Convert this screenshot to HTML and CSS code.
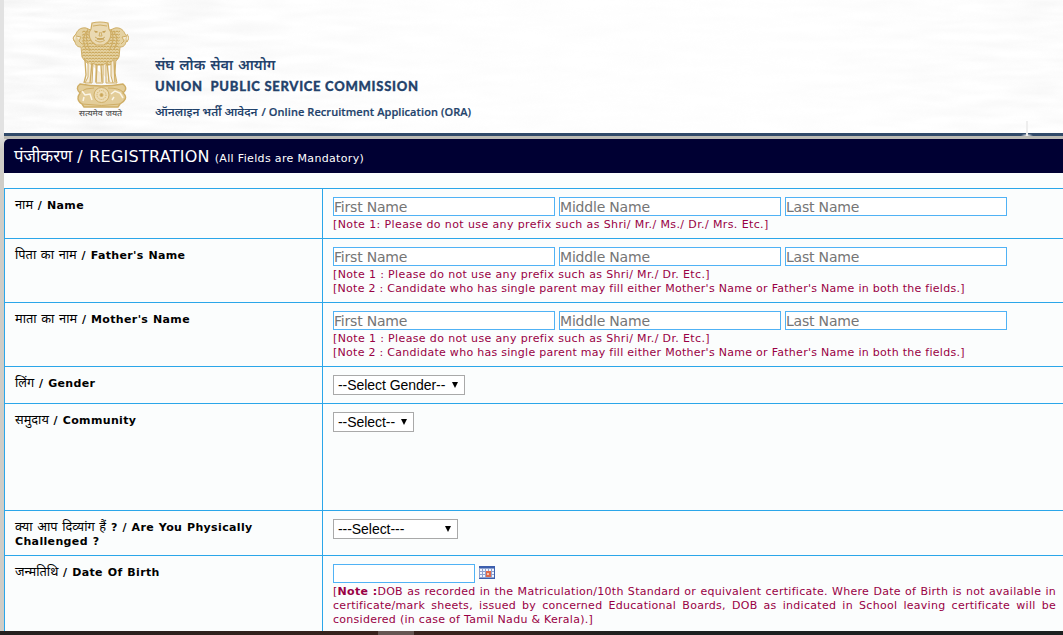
FILE: index.html
```html
<!DOCTYPE html>
<html lang="hi">
<head>
<meta charset="utf-8">
<title>UPSC Online Recruitment Application</title>
<link rel="stylesheet" href="styles.css">
</head>
<body>
<div class="page">
  <header class="banner">
    <svg class="texture" width="1059" height="133" aria-hidden="true">
      <defs>
        <filter id="streaks" x="0" y="0" width="100%" height="100%">
          <feTurbulence type="fractalNoise" baseFrequency="0.018 0.12" numOctaves="2" seed="4"/>
          <feColorMatrix values="0 0 0 0 .82  0 0 0 0 .82  0 0 0 0 .82  1 0 0 0 -.28"/>
        </filter>
        <linearGradient id="fade">
          <stop offset="0" stop-color="#fff"/><stop offset=".2" stop-color="#999"/>
          <stop offset=".4" stop-color="#333"/><stop offset=".72" stop-color="#222"/><stop offset="1" stop-color="#999"/>
        </linearGradient>
        <mask id="edges"><rect width="1059" height="133" fill="url(#fade)"/></mask>
      </defs>
      <g mask="url(#edges)"><rect width="1059" height="133" filter="url(#streaks)"/></g>
    </svg>
    <div class="crest">
      <svg class="emblem" viewBox="72 21 57 87" width="57" height="87" fill="none" stroke="#cfae66" stroke-width="1" role="img" aria-label="State emblem">
        <defs>
          <pattern id="mane" width="3" height="3" patternUnits="userSpaceOnUse">
            <path d="M0 1l1.500 1L3 1" stroke="#c7a252" stroke-width="1"/>
          </pattern>
        </defs>
        <path fill="#e5d2a2" d="M86 28c-6-1-9 3-10 6-2 2-4 5-1 8 1 4 3 5 6 5l1 10c3 5 6 7 10 8h17c4-1 7-3 10-8l1-10c3 0 5-1 6-5 3-3 1-6-1-8-1-3-4-7-10-6l-7 3H93z"/>
        <path fill="url(#mane)" stroke="none" d="M82 30h38l-1 28-9 7H91l-9-8z"/>
        <path fill="#f4ead2" d="M76 34l-3 4 2 4m1-6 5 1-2 4 3 3m45-10 2 4-2 4m0-6-5 1 2 4-3 3"/>
        <path fill="#ead9b2" stroke-width="1.200" d="M92 23q8-2 16 0l1 6c3 4 2 9-1 13l-4 3h-8l-4-3c-3-4-4-9-1-13z"/>
        <path d="M93 26q7-2 14 0M94 31l4 1m8-1-4 1m-2 0-1 4h3l-1-4m-6 5q5 4 10 0m-10 3q5 4 10 0"/>
        <path stroke="#b99243" stroke-width="1.200" d="M95 32h2m6 0h2m-8 7h7"/>
        <path stroke-width="1.200" d="M86 32q-5 8 0 17m28-17q6 8 0 17M88 29q-4 10 2 22m21-22q5 10-2 22"/>
        <path fill="#f5ebd6" d="M84 59l4 3v15l-3 6h7l1-20 3 2v18h7V65l3-2v20h7l-2-7V62l5-4-1 15 2 10h-4"/>
        <path stroke-width="1.400" d="M85 60l1 15-2 8m8-20-2 20m7-18-1 17m5-17 1 17m5-20 2 20m5-22 1 22"/>
        <path fill="#e3cd99" stroke-width="1.400" d="M80 84q21 4 43 0c5 4 2 7 0 9 5 4 2 8-3 11l-2 3H84l-2-3c-5-3-5-7-2-11-3-3-4-6 0-9z"/>
        <path d="M80 92q5-4 14-4m14 0q11 0 15 4M82 104q20 3 38 0"/>
        <circle cx="101.500" cy="95" r="7.500" fill="#eddcb4"/>
        <circle cx="101.500" cy="95" r="4.500" stroke-dasharray="1 1"/><circle cx="101.500" cy="95" r="1.500" fill="#c9a557"/>
        <path stroke="#fbf5e6" stroke-width="1.500" d="M82 91l3 4 5-1 2 6m-8-3-1 4m28-7 4-3 5 2 3 5m-9-1-2 3"/>
      </svg>
      <div class="motto">सत्यमेव जयते</div>
    </div>
    <div class="titles">
      <div class="hindi-title">संघ लोक सेवा आयोग</div>
      <div class="org">UNION&nbsp; PUBLIC SERVICE COMMISSION</div>
      <div class="app"><span class="app-hi">ऑनलाइन भर्ती आवेदन</span> <span class="app-en">/ Online Recruitment Application (ORA)</span></div>
    </div>
  </header>
  <div class="rule"><i class="glint"></i></div>
  <h1 class="bar"><span class="bar-hi">पंजीकरण</span><span class="bar-en">/ REGISTRATION</span><small>(All Fields are Mandatory)</small></h1>
  <main class="form">
    <div class="row name-row">
      <div class="label"><span class="hi">नाम</span> / Name</div>
      <div class="field"><div class="inputs"><input placeholder="First Name"><input placeholder="Middle Name"><input placeholder="Last Name"></div>
        <p class="note n1">[Note 1: Please do not use any prefix such as Shri/ Mr./ Ms./ Dr./ Mrs. Etc.]</p></div>
    </div>
    <div class="row parent-row">
      <div class="label"><span class="hi">पिता का नाम</span> / Father's Name</div>
      <div class="field"><div class="inputs"><input placeholder="First Name"><input placeholder="Middle Name"><input placeholder="Last Name"></div>
        <p class="note n2">[Note 1 : Please do not use any prefix such as Shri/ Mr./ Dr. Etc.]</p>
        <p class="note">[Note 2 : Candidate who has single parent may fill either Mother's Name or Father's Name in both the fields.]</p></div>
    </div>
    <div class="row parent-row">
      <div class="label"><span class="hi">माता का नाम</span> / Mother's Name</div>
      <div class="field"><div class="inputs"><input placeholder="First Name"><input placeholder="Middle Name"><input placeholder="Last Name"></div>
        <p class="note n2">[Note 1 : Please do not use any prefix such as Shri/ Mr./ Dr. Etc.]</p>
        <p class="note">[Note 2 : Candidate who has single parent may fill either Mother's Name or Father's Name in both the fields.]</p></div>
    </div>
    <div class="row gender-row">
      <div class="label"><span class="hi">लिंग</span> / Gender</div>
      <div class="field"><div class="select s-gender"><span>--Select Gender--</span><i></i></div></div>
    </div>
    <div class="row community-row">
      <div class="label"><span class="hi">समुदाय</span> / Community</div>
      <div class="field"><div class="select s-community"><span>--Select--</span><i></i></div></div>
    </div>
    <div class="row challenged-row">
      <div class="label"><span class="hi">क्या आप दिव्यांग हैं</span> ? / Are You Physically<br>Challenged ?</div>
      <div class="field"><div class="select s-challenged"><span>---Select---</span><i></i></div></div>
    </div>
    <div class="row dob-row">
      <div class="label"><span class="hi">जन्मतिथि</span> / Date Of Birth</div>
      <div class="field"><div class="inputs"><input class="date" aria-label="Date of birth">
        <svg class="calendar" width="16" height="13" viewBox="0 0 16 13" aria-label="Calendar">
          <path fill="#8fa3d0" d="M0 0h16v13H0z"/><path fill="#3c5fae" d="M0 0h16v2H0zM15 0h1v13h-1zM0 12h16v1H0z"/>
          <path fill="#f2f6ff" d="M1 3h2v2H1zm3 0h2v2H4zm3 0h2v2H7zm3 0h2v2h-2zM1 6h2v2H1zm3 0h2v2H4zM1 9h2v2H1zm3 0h2v2H4zm9-6h2v2h-2zm0 3h2v2h-2zm0 3h2v2h-2z"/>
          <path fill="#e0694a" d="M7 5h5v6H7z"/><path fill="#f8c4a8" d="M8 7h2v2H8z"/>
        </svg></div>
        <p class="note just">[<b>Note :</b>DOB as recorded in the Matriculation/10th Standard or equivalent certificate. Where Date of Birth is not available in</p>
        <p class="note just">certificate/mark sheets, issued by concerned Educational Boards, DOB as indicated in School leaving certificate will be</p>
        <p class="note">considered (in case of Tamil Nadu &amp; Kerala).]</p></div>
    </div>
  </main>
  <footer class="taskbar"><i></i></footer>
</div>
</body>
</html>
```
FILE: styles.css
```css
* { box-sizing: border-box; }
body { margin: 0; width: 1063px; height: 635px; overflow: hidden; background: #d1cfc9; font-family: "DejaVu Sans", "Noto Sans", sans-serif; }
i { font-style: normal; }
.page { height: 635px; padding-left: 4px; display: flex; flex-direction: column; background: linear-gradient(#e2e2e2 0 133px, #cfcdc7 150px); }
.banner { height: 133px; background: #fff; position: relative; display: flex; overflow: hidden; }
.texture { position: absolute; inset: 0; }
.crest { position: relative; width: 151px; padding: 21px 0 0 68px; }
.emblem { display: block; }
.motto { width: 57px; text-align: center; font-size: 8.6px; line-height: 11px; color: #555; font-weight: 500; white-space: nowrap; }
.titles { position: relative; color: #23426b; padding-top: 55px; white-space: nowrap; }
.hindi-title { font-size: 14.4px; line-height: 21px; font-weight: 600; }
.org { font-family: Lato, sans-serif; font-weight: 900; font-size: 13px; line-height: 20px; letter-spacing: .72px; -webkit-text-stroke: .3px #23426b; }
.app { font-family: "Open Sans", "Noto Sans", sans-serif; font-weight: 600; font-size: 11px; line-height: 14px; margin-top: 8px; display: flex; align-items: baseline; }
.app-hi { font-size: 11.7px; line-height: 14px; margin-right: 4px; }
.app-en { letter-spacing: .07px; -webkit-text-stroke: .2px #23426b; }
.rule { height: 6px; background: linear-gradient(#314a6a 0 3px, #bbbab4 3px 6px); position: relative; }
.glint { position: absolute; left: 1015px; top: -12px; width: 16px; height: 15px; background: radial-gradient(ellipse 7px 3px at 50% 100%, #eee 10%, transparent 90%), linear-gradient(90deg, transparent 7px, #eee 7px 9px, transparent 9px); }
.bar { margin: 0; height: 34px; flex: none; background: #000033; color: #fff; border-top-left-radius: 5px; padding-left: 10px; display: flex; align-items: baseline; font-weight: normal; font-size: 16px; line-height: 35px; white-space: pre; }
.bar-hi { font-size: 16.8px; }
.bar-en { margin-left: 5px; font-size: 16px; letter-spacing: .25px; word-spacing: 1px; }
.bar small { margin-left: 5px; font-size: 11px; letter-spacing: .34px; }
.form { flex: 1; min-height: 0; background: #fbfdfd; padding-top: 15px; overflow: hidden; }
.row { display: grid; grid-template-columns: 318px 1fr; border-top: 1px solid #2ba6e9; border-left: 1px solid #2ba6e9; }
.label { padding: 10px 0 0 10px; font-weight: bold; font-size: 11px; line-height: 14px; letter-spacing: .35px; word-spacing: .6px; color: #000; border-right: 1px solid #2ba6e9; white-space: nowrap; }
.hi { font-size: 12.8px; line-height: 1; font-weight: normal; letter-spacing: 0; word-spacing: .6px; }
.field { padding: 8px 7px 0 10px; }
.name-row { height: 50px; }
.parent-row { height: 64px; }
.gender-row { height: 37px; }
.community-row { height: 107px; }
.challenged-row { height: 45px; }
.dob-row { height: 90px; }
.inputs { display: flex; gap: 4px; height: 19px; margin-bottom: 2px; }
input { width: 222px; height: 19px; border: 1px solid #50b2f5; border-radius: 0; padding: 1px 0 1px 0; font: 14px "DejaVu Sans", sans-serif; letter-spacing: -.2px; background: #fff; outline: 0; }
input::placeholder { color: #757575; opacity: 1; }
.date { width: 142px; }
.calendar { margin-top: 2px; }
.note { margin: 0; font-size: 11px; line-height: 14px; letter-spacing: .28px; color: #990044; white-space: nowrap; }
.n1 { letter-spacing: .39px; }
.n2 { letter-spacing: .36px; }
.just { text-align-last: justify; }
.select { height: 20px; border: 1px solid #a9a9a9; background: #fff; display: flex; align-items: center; justify-content: space-between; padding: 0 6px 0 4px; font: 14px "Liberation Sans", sans-serif; letter-spacing: -.05px; color: #000; white-space: nowrap; }
.select i { border: 3.5px solid transparent; border-top: 6px solid #000; border-bottom: 0; }
.s-gender { width: 132px; }
.s-community { width: 81px; }
.s-challenged { width: 125px; }
.taskbar { height: 4px; flex: none; margin-left: -4px; background: linear-gradient(90deg, #24201f, #38231d 35%, #38231d 45%, #1c2020 60%); }
.taskbar i { display: block; width: 36px; height: 4px; margin-left: 378px; background: #655753; }
```
